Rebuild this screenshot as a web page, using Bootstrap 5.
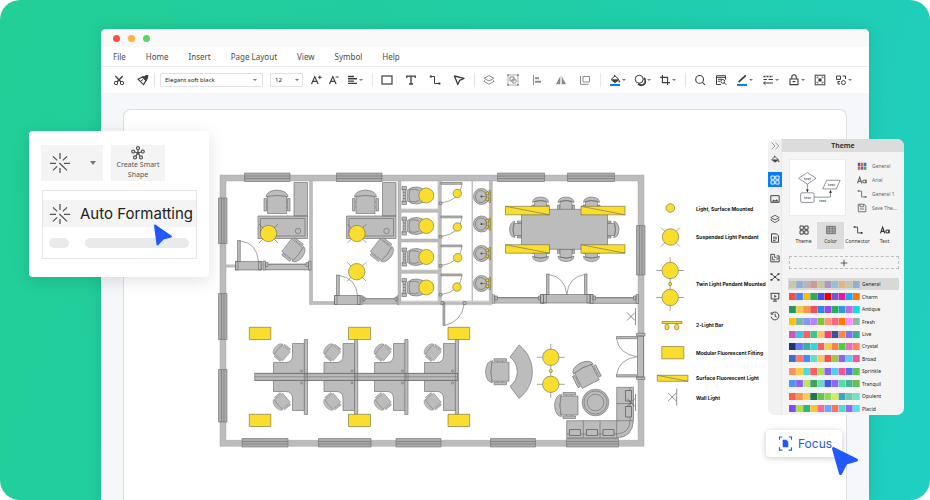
<!DOCTYPE html>
<html lang="en">
<head>
<meta charset="utf-8">
<meta name="viewport" content="width=device-width, initial-scale=1">
<title>Floor plan editor</title>
<link href="https://cdn.jsdelivr.net/npm/bootstrap@5.3.0/dist/css/bootstrap.min.css" rel="stylesheet">
<style>
  body { font-family: "Noto Sans", "Open Sans", sans-serif; background: #fff; color: #444; }
  .stage { min-height: 100vh; border-radius: 20px; background: linear-gradient(110deg, #22cf96 0%, #21cda2 40%, #1fcfc2 100%); padding: 29px 61px 0 101px; }
  .app-window { border-radius: 5px 5px 0 0; background: #f5f7fa; box-shadow: 0 0 16px rgba(0, 60, 50, .14); }
  .titlebar { height: 18px; background: #f9f9f9; padding-left: 12px; gap: 8px; }
  .dot { width: 7px; height: 7px; }
  .dot-red { background: #fe4b4f; } .dot-amber { background: #feb140; } .dot-green { background: #5cd46c; }
  .menubar { height: 20px; gap: 20px; padding-left: 12px; border-bottom: 1px solid #ececec; }
  .menubar a { font-size: 8px; line-height: 12px; color: #4a4a4a; }
  .toolbar { height: 26px; padding-left: 12px; }
  .tools { gap: 12px; } .tools-6 { gap: 6px; } .tools-8 { gap: 8px; } .tools-9 { gap: 9px; }
  .tool { border: 0; background: none; padding: 0; height: 14px; color: #3d3d3d; display: flex; align-items: center; }
  .tool svg { width: 12px; height: 12px; }
  .tool.muted { color: #8a8a8a; }
  .tool.drop { width: 17px; justify-content: space-between; }
  .tool.drop::after, .caret { content: ""; border: 2px solid transparent; border-top-color: #777; border-bottom: 0; }
  .rule { width: 1px; height: 14px; background: #e8e8e8; margin: 0 8px 0 9px; }
  .rule.tight { margin: 0 5px; }
  .pick { appearance: none; height: 14px; border: 1px solid #e2e2e2; border-radius: 1px; padding: 0 4px; font-size: 6px; line-height: 11px; color: #222;
    background: #fff url("data:image/svg+xml,%3Csvg xmlns='http://www.w3.org/2000/svg' viewBox='0 0 4 2'%3E%3Cpath d='M0 0h4L2 2z' fill='%23777'/%3E%3C/svg%3E") no-repeat right 5px center / 4px 2px; }
  .pick-font { width: 103px; } .pick-size { width: 33px; margin: 0 7px; background-position: right 3px center; }
  .workspace { padding: 16px 22px 0; }
  .paper { background: #fff; border: 1px solid #dcdee0; border-bottom: 0; border-radius: 8px 8px 0 0; }
  .ic { fill: none; stroke: currentColor; stroke-width: 1; display: block; flex: none; }

  .smart-card { top: 131px; left: 29px; width: 180px; padding: 14px 12px 18px; border-radius: 4px; background: #fff; box-shadow: 0 4px 18px rgba(0, 0, 0, .12); }
  .tile { border: 0; background: #f4f4f4; height: 36px; color: #555; padding: 0; font-size: 7px; line-height: 10px; }
  .tile-burst { width: 62px; gap: 18px; } .tile-shape { width: 54px; white-space: nowrap; }
  .caret { border-width: 3px; border-top-width: 4px; }
  .result { border: 1px solid #e6e6e6; margin: 9px 0 0 1px; padding: 9px 0 10px; }
  .result-item { background: #f4f4f4; border: 0; width: 100%; height: 27px; padding: 0 5px; gap: 8px; font-family: Inter, sans-serif; font-size: 15px; line-height: 20px; color: #222; white-space: nowrap; }
  .result-item svg { color: #555; }
  .pill { height: 10px; border-radius: 5px; background: #eaeaea; }
  .pill-row { gap: 16px; padding: 11px 7px 0 6px; }
  .pill-short { width: 20px; }
  .pointer-small { left: 124px; top: 92px; width: 20px; height: 24px; }
  .pointer-big { left: 65px; top: 16px; width: 28px; height: 30px; }

  .theme-panel { top: 139px; right: 26px; width: 136px; height: 276px; border-radius: 7px; background: #f4f4f4; overflow: hidden; font-size: 5px; line-height: 8px; color: #444; }
  .rail { width: 14px; padding-bottom: 91px; background: #f1f1f1; border-right: 1px solid #e9e9e9; }
  .rail button { border: 0; padding: 0; background: none; width: 14px; height: 15px; color: #444; display: flex; align-items: center; justify-content: center; }
  .rail button svg { width: 10px; height: 10px; }
  .rail .fold { height: 13px; color: #888; } .rail .paint { margin-bottom: 5px; }
  .rail .on { background: #087cff; color: #fff; }
  .panel-title { height: 13px; background: #dcdcdc; font-size: 7px; line-height: 13px; font-weight: 600; color: #222; margin: 0; text-align: center; }
  .preview { width: 57px; height: 57px; background: #fff; border: 1px solid #ececec; }
  .top-part { padding: 7px 0 0 7px; gap: 11px; }
  .opts { gap: 4px; padding-top: 2px; }
  .opts button { border: 0; background: none; padding: 0; color: #666; display: flex; align-items: center; gap: 5px; height: 10px; white-space: nowrap; }
  .opts svg { width: 10px; height: 10px; }
  .tabs { padding: 6px 5px 0 8px; }
  .tabs button { border: 0; background: none; padding: 3px 0 0; width: 27px; height: 27px; color: #333; display: flex; flex-direction: column; align-items: center; gap: 2px; }
  .tabs svg { width: 10px; height: 10px; }
  .tabs .on { background: #dcdcdc; }
  .add { border: 1px dashed #bdbdbd; background: none; margin: 7px 5px 9px 7px; height: 13px; padding: 0; display: flex; align-items: center; justify-content: center; color: #444; }
  .add svg { width: 8px; height: 8px; }
  .schemes { margin: 0 5px 0 6px; }
  .schemes button { border: 0; background: none; padding: 0 0 0 1px; gap: 2px; color: #222; min-height: 0; }
  .schemes .on { background: #d8d8d8; }
  .schemes .on svg { opacity: .45; }
  .schemes svg { width: 71px; height: 7px; flex: none; }
  .focus-wrap { top: 430px; right: 88px; width: 76px; }
  .focus-btn { height: 27px; border: 0; border-radius: 4px; background: #fff; color: #2458f5; font-family: Inter, sans-serif; font-size: 12px; line-height: 16px; padding: 0 0 0 12px; gap: 5px; box-shadow: 0 1px 6px rgba(0, 0, 0, .22); }

  .plan text { font: bold 5px Inter, sans-serif; fill: #111; }
  .solid { fill: #bcbcbc; stroke: #666; stroke-width: .6; }
  .glass { fill: #ababab; stroke: #6e6e6e; stroke-width: .6; }
  .thin { fill: none; stroke: #666; stroke-width: .6; }
  .lamp { fill: #fbdd2e; stroke: #6f6a3c; stroke-width: .6; }
  .wall { fill: none; stroke: #bcbcbc; stroke-width: 3; }
  .edge { fill: none; stroke: #999; stroke-width: .4; }
</style>
</head>
<body>
<svg class="d-none" xmlns="http://www.w3.org/2000/svg">
  <symbol id="i-cut" viewBox="0 0 12 12"><path d="M2.3 2 8 8M9.7 2 4 8" stroke-width="1.3"/><circle cx="3" cy="9" r="1.7"/><circle cx="9" cy="9" r="1.7"/></symbol>
  <symbol id="i-brush" viewBox="0 0 12 12"><path d="M1 5.200 5.600 3l3.400 3.600L6.600 10.600z" stroke-width="1.200"/><path d="M5.600 2.800 9.200 6.600 10.200 4.800 11 1.600 8.600 1.600 7.600 2.600z" fill="currentColor"/><path d="M3.600 7.400 6 5.400"/></symbol>
  <symbol id="i-aplus" viewBox="0 0 12 12"><path d="M1.5 10 4.8 2.6 8.1 10M2.8 7.3h4" stroke-width="1.2"/><path d="M8 3.3h3.6M9.8 1.5v3.6"/></symbol>
  <symbol id="i-aminus" viewBox="0 0 12 12"><path d="M1.5 10 4.8 2.6 8.1 10M2.8 7.3h4" stroke-width="1.2"/><path d="M7.6 3h3"/></symbol>
  <symbol id="i-align" viewBox="0 0 12 12"><path d="M2 2.500h6M2 4.800h9M2 7.100h6M2 9.400h9" stroke-width="1.400"/></symbol>
  <symbol id="i-rect" viewBox="0 0 12 12"><rect x="1" y="2" width="10" height="8" stroke-width="1.2"/></symbol>
  <symbol id="i-text" viewBox="0 0 12 12"><path d="M1.8 4V2.2h8.4V4M6 2.2V10M4 10h4" stroke-width="1.3"/></symbol>
  <symbol id="i-conn" viewBox="0 0 12 12"><path d="M2 2.5h3.5V9.5H10"/><path d="M.8 1.4h2v2h-2zM9.4 8.4h2v2h-2z" fill="currentColor" stroke="none"/></symbol>
  <symbol id="i-arrow" viewBox="0 0 12 12"><path d="M1.5 2 11 4.4 6.7 6.3 4.8 10.6z" stroke-width="1.3" stroke-linejoin="round"/></symbol>
  <symbol id="i-layers" viewBox="0 0 12 12"><path d="M6 1.6 11 4.3 6 7 1 4.3zM1.6 6.2 1 7.3 6 10.3 11 7.3 10.4 6.2" stroke-linejoin="round"/></symbol>
  <symbol id="i-group" viewBox="0 0 12 12"><path d="M1 1h10v10H1z" stroke-width=".7"/><path d="M3 3h4v4H3z"/><circle cx="7" cy="7" r="2.2"/><path d="M.2.2h1.800v1.800H.2zM10 .2h1.800v1.800H10zM.2 10h1.800v1.800H.2zM10 10h1.800v1.800H10z" fill="currentColor" stroke="none"/></symbol>
  <symbol id="i-left" viewBox="0 0 12 12"><path d="M2.5 1v10"/><path d="M4 4.3h4M4 7.7h6" stroke-width="2"/></symbol>
  <symbol id="i-flip" viewBox="0 0 12 12"><path d="M5.3 2V10.3H1zM6.7 2V10.3H11z" fill="currentColor" stroke="none"/></symbol>
  <symbol id="i-stack" viewBox="0 0 12 12"><path d="M4 2.500h6.500v5.500H4zM1.500 2V10.300H9.500"/></symbol>
  <symbol id="i-fill" viewBox="0 0 12 12"><path d="M5.6.8V3M6 1.8 10 5.6 6 8.6 2 5.6z"/><path d="M3 5.6h7L6 8.4zM10.4 6.4l.8 1.6h-1.6z" fill="currentColor" stroke-width=".5"/></symbol>
  <symbol id="i-fillbar" viewBox="0 0 12 12"><use href="#i-fill"/><path d="M1 11h10" stroke="#087cff" stroke-width="1.8"/></symbol>
  <symbol id="i-shadow" viewBox="0 0 12 12"><path d="M9.800 4a4 4 0 1 1-5.600 5.600" stroke-width="1.800"/><circle cx="5.200" cy="5.200" r="4"/></symbol>
  <symbol id="i-crop" viewBox="0 0 12 12"><path d="M3.4 1v7.6H11M1 3.4h7.6V11" stroke-width="1.1"/></symbol>
  <symbol id="i-search" viewBox="0 0 12 12"><circle cx="5.6" cy="5.4" r="3.9" stroke-width="1.1"/><path d="m8.4 8.4 2.6 2.4" stroke-width="1.1"/></symbol>
  <symbol id="i-find" viewBox="0 0 12 12"><path d="M6 10.5H1.5V1.7h9v4M1.5 3.4h9M3 5.3h4M3 7.3h2"/><circle cx="7.8" cy="7.4" r="1.9"/><path d="m9.2 8.8 2 2"/></symbol>
  <symbol id="i-pen" viewBox="0 0 12 12"><path d="M2.6 8.2 9.8 1.4" stroke-width="1.7"/><path d="M1 11h10" stroke="#087cff" stroke-width="1.8"/></symbol>
  <symbol id="i-lines" viewBox="0 0 12 12"><path d="M1.500 2.500h9.500" stroke-width="1.400" stroke-dasharray="2 1"/><path d="M1.500 5.500h3.500M6.500 5.500H11M1.500 9h9.500M3.400 7.600 1.600 9l1.800 1.400"/></symbol>
  <symbol id="i-lock" viewBox="0 0 12 12"><path d="M2 5h8v5.6H2zM3.8 5V3a2.2 2.2 0 0 1 4.4 0V5M4.6 7.6h2.8" stroke-width="1.1"/></symbol>
  <symbol id="i-frame" viewBox="0 0 12 12"><rect x="1.2" y="1.2" width="9.6" height="9.6"/><path d="M3 4.4V3h1.4M7.6 3H9v1.4M9 7.6V9H7.6M4.4 9H3V7.6" stroke-width=".8"/><path d="M4.4 4.4h3.2v3.2H4.4z" fill="currentColor" stroke="none"/></symbol>
  <symbol id="i-swap" viewBox="0 0 12 12"><path d="M1.5 2h4v3.4h-4zM7.5 2h3v3M3 7v3h2"/><circle cx="8.4" cy="8.6" r="2"/><path d="M3 7.5h2"/></symbol>
  <symbol id="i-burst" viewBox="0 0 24 24"><path d="M12 2v6M12 17v5M2 12.4h6M16 12.4h6M5 5.4l4.2 4M19 5.4l-4.2 4M5 19.4l4.2-4M11.4 12l7.6 7.4" stroke-width="1.3"/></symbol>
  <symbol id="i-smart" viewBox="0 0 14 14"><g stroke-width="1.2"><circle cx="7" cy="2.2" r="1.5"/><circle cx="2.2" cy="5.6" r="1.5"/><circle cx="11.8" cy="5.6" r="1.5"/><circle cx="4" cy="11.4" r="1.5"/><circle cx="10" cy="11.4" r="1.5"/><path d="M7 3.5V7M3.5 6 7 7l3.5-1M7 7 4.8 10.2M7 7l2.2 3.2"/></g><circle cx="7" cy="7" r="1.6" fill="currentColor" stroke="none"/></symbol>
  <symbol id="i-fold" viewBox="0 0 12 12"><path d="m2 2 4 4-4 4M6.5 2l4 4-4 4"/></symbol>
  <symbol id="i-grid" viewBox="0 0 12 12"><path d="M1.2 1.2h4v4h-4zM6.9 1.2h4v4h-4zM1.2 6.9h4v4h-4zM6.9 6.9h4v4h-4z" stroke-width="1.1"/></symbol>
  <symbol id="i-image" viewBox="0 0 12 12"><path d="M1 2h10v8H1z" stroke-width="1.2"/><path d="M2 9 4.5 6.6 6 8 8 6.4 10 9z" fill="currentColor" stroke="none"/></symbol>
  <symbol id="i-doc" viewBox="0 0 12 12"><path d="M1.8 1h6L10.2 3.4V11H1.8z" stroke-width="1.2"/><path d="M3.6 5h4.8M3.6 7h4.8M3.6 9h3"/></symbol>
  <symbol id="i-plan" viewBox="0 0 12 12"><path d="M5.500 1.600H1v9h10V3.500H8" stroke-width="1.200"/><path d="M3.200 4v4.200h3M5.500 1.600v3.600h2.500M8.500 8.400V6.200H11"/></symbol>
  <symbol id="i-net" viewBox="0 0 12 12"><path d="m2 2.6 8 6.8M10 2.6 2 9.4"/><path d="M.6 1.4h2.4v2.2H.6zM9 1.4h2.4v2.2H9zM.6 8.4h2.4v2.2H.6zM9 8.4h2.4v2.2H9zM4.8 4.8h2.4v2.4H4.8z" fill="currentColor" stroke="none"/></symbol>
  <symbol id="i-show" viewBox="0 0 12 12"><path d="M.6 1.6h10.8M1.4 1.6v6.8h9.2V1.6M6 8.4V11M3.6 11h4.8" stroke-width="1.2"/><path d="M5 3.2 8 5 5 6.8z" fill="currentColor" stroke="none"/></symbol>
  <symbol id="i-hist" viewBox="0 0 12 12"><path d="M2 3.4a4.7 4.7 0 1 1-.7 3.4M1.4 1.4v2.4h2.6M6.2 3.4v3l2 1" stroke-width="1.2"/></symbol>
  <symbol id="i-aa" viewBox="0 0 12 12"><path d="M.6 10 3.2 2.6 5.8 10M1.4 7.6h3.6" stroke-width="1.4"/><circle cx="8.8" cy="7.8" r="1.8" stroke-width="1.3"/><path d="M11 5.4V10" stroke-width="1.3"/></symbol>
  <symbol id="i-save" viewBox="0 0 12 12"><path d="M1.5 1.5H8.6l2 2v7h-9zM3.6 1.5v3h4.4v-3M3.4 7.2h5.2" stroke-width="1.1"/></symbol>
  <symbol id="i-colors" viewBox="0 0 12 12"><g stroke="none"><path fill="#5d52a8" d="M1 2h3v4H1z"/><path fill="#de6157" d="M4.6 2h3v4h-3z"/><path fill="#3972c5" d="M8.2 2h3v4h-3z"/><path fill="#e3574e" d="M1 6.6h3v4H1z"/><path fill="#7d5f9e" d="M4.6 6.6h3v4h-3z"/><path fill="#49a76c" d="M8.2 6.6h3v4h-3z"/></g></symbol>
  <symbol id="i-table" viewBox="0 0 12 12"><path d="M.8 1.600h10.400v8.800H.8z" fill="#aaa" stroke="#666"/><path d="M.8 4.400h10.400M.8 7.400h10.400M4 1.600v8.800M7.800 1.600v8.800" stroke="#777" stroke-width=".8"/></symbol>
  <symbol id="i-plus" viewBox="0 0 12 12"><path d="M6 1v10M1 6h10" stroke-width="1.3"/></symbol>
  <symbol id="i-focus" viewBox="0 0 16 18"><path d="M1.6 5V2H4.6M11.4 2h3v3M14.4 13v3h-3M4.6 16h-3v-3" stroke-width="1.2"/><path d="M5 5h3.8L11 7.2V13H5z" fill="currentColor" stroke="none"/></symbol>

  <symbol id="chair" viewBox="-15 -15 30 30" overflow="visible">
    <path class="solid" d="M-11-7Q-11-13 0-14 11-13 11-7L9-7.500Q0-9.500-9-7.500z"/>
    <path class="solid" d="M-9.500-7.500Q0-9.500 9.500-7.500V9.500H-9.500z"/>
    <path class="solid" d="M-13-5.500h2.500V7H-13zM10.500-5.500H13V7H10.500z"/>
    <path class="thin" d="M-10.500-2h1M-10.500 3h1M9.500-2h1M9.500 3h1"/>
  </symbol>
  <symbol id="seat" viewBox="-9 -7 18 14" overflow="visible">
    <path class="solid" d="M-6 6V-2Q0-4 6-2V6zM-8-1Q-8-6 0-6.500 8-6 8-1L6-2Q0-4-6-2z"/>
    <path class="solid" d="M-8.500 1.500h2V6h-2zM6.500 1.500h2V6h-2z"/>
  </symbol>
  <symbol id="pendant" viewBox="-11 -11 22 22" overflow="visible"><path class="thin" d="m-9.500-9.500 19 19M9.500-9.500l-19 19"/><circle class="lamp" r="8.200"/></symbol>
  <symbol id="twin" viewBox="-15 -28 30 56" overflow="visible"><path class="thin" d="M0-27V27M-14-13.500H14M-14 13.500H14"/><circle class="lamp" cy="-13.500" r="8.200"/><circle class="lamp" cy="13.500" r="8.200"/><circle class="lamp" r="1.600"/></symbol>
  <symbol id="toilet" viewBox="0 -9 32 18" overflow="visible">
    <path class="solid" d="M0-9h4.500v3.500H3.500v11H4.500V9H0V5.500H1v-11H0zM5-5Q9-9 15-8.500 25-7 26 0 25 7 15 8.500 9 9 5 5z"/>
    <path class="thin" d="M8-6Q14-7 17-5M8 6Q14 7 17 5M8-6Q6 0 8 6M1-3h2.500M1 0h2.500M1 3h2.500M0-6h4M0 6h4"/><circle class="lamp" cx="24.300" r="7.500"/>
  </symbol>
  <symbol id="sink" viewBox="-9 -9 18 18" overflow="visible">
    <circle class="solid" r="8"/><ellipse class="thin" cx="-.5" rx="5.500" ry="6"/><path class="thin" d="M-1 0H5"/><circle r=".9" fill="#444"/>
    <path class="lamp" d="M7.500-6H9V6H7.500zM4.500-4.500h3v2.500h-3zM4.500 1.500h3V4h-3z"/>
  </symbol>
  <symbol id="fluor" viewBox="0 0 44 9" overflow="visible"><path class="lamp" d="M0 0H44V8.500H0z"/><path class="thin" d="m0 0 44 8.500"/></symbol>
  <symbol id="walllight" viewBox="-5 -9 10 18" overflow="visible"><path class="thin" d="m-4.500-4 8 8M-4.500 4l8-8M4-8.500v17" style="stroke:#444"/></symbol>
  <symbol id="stalldoor" viewBox="0 0 22 22" overflow="visible"><path class="solid" d="M0 0H21V1.800H0z"/><path class="thin" d="M21 1.800Q19 18 0 20.500"/><path class="solid" d="M-2 19.500H1v2.500h-3z"/></symbol>
  <symbol id="glazing" viewBox="0 0 48 9" overflow="visible"><path d="M0 3.500H48V9H0z" fill="#bcbcbc"/><path class="thin" d="M0 8.800H48"/><path d="M3 3.200H45" stroke="#444" stroke-width=".8"/><path class="solid" d="M0 0H2.500V9H0zM45.500 0H48V9H45.500zM2.500 1.500H5V5.500H2.500zM43 1.500h2.500v4H43z"/></symbol>
  <symbol id="cubicle" viewBox="0 0 52 38" overflow="visible">
    <path class="solid" d="M19 4H31V34H0V23H12Q19 23 19 16z"/><circle class="thin" cx="28" cy="31.500" r="1"/>
    <g transform="translate(8.500 13) rotate(-50) scale(.62)"><use href="#chair" x="-15" y="-15" width="30" height="30"/></g>
  </symbol>
  <symbol id="office" viewBox="0 0 50 90" overflow="visible">
    <path class="solid" d="M36 0H49.500V33.500H36zM0 33.500H49.500V56H0z"/><path class="thin" d="M2.500 36H47V53.500H2.500z"/><circle class="thin" cx="40" cy="48.500" r="2.700"/>
    <use href="#chair" x="4" y="6.500" width="30" height="30"/>
    <g transform="translate(35 67.500) rotate(128) scale(.84)"><use href="#chair" x="-15" y="-15" width="30" height="30"/></g>
    <use href="#pendant" x="-.500" y="40" width="22" height="22"/>
  </symbol>
</svg>

<main class="stage position-relative d-flex flex-column overflow-hidden">
  <div class="app-window flex-fill d-flex flex-column overflow-hidden">
    <div class="titlebar d-flex align-items-center"><span class="dot dot-red rounded-circle"></span><span class="dot dot-amber rounded-circle"></span><span class="dot dot-green rounded-circle"></span></div>
    <nav class="menubar d-flex align-items-center bg-white" aria-label="Main menu">
      <a class="text-decoration-none" href="#">File</a><a class="text-decoration-none" href="#">Home</a><a class="text-decoration-none" href="#">Insert</a><a class="text-decoration-none" href="#">Page Layout</a><a class="text-decoration-none" href="#">View</a><a class="text-decoration-none" href="#">Symbol</a><a class="text-decoration-none" href="#">Help</a>
    </nav>
    <div class="toolbar d-flex align-items-center bg-white" role="toolbar" aria-label="Tools">
      <div class="tools d-flex">
        <button class="tool" aria-label="Cut"><svg class="ic"><use href="#i-cut"/></svg></button>
        <button class="tool" aria-label="Format painter"><svg class="ic"><use href="#i-brush"/></svg></button>
      </div>
      <span class="rule tight"></span>
      <select class="pick pick-font" aria-label="Font"><option>Elegant soft black</option></select>
      <select class="pick pick-size" aria-label="Font size"><option>12</option></select>
      <div class="tools-6 d-flex">
        <button class="tool" aria-label="Larger text"><svg class="ic"><use href="#i-aplus"/></svg></button>
        <button class="tool" aria-label="Smaller text"><svg class="ic"><use href="#i-aminus"/></svg></button>
        <button class="tool drop" aria-label="Align text"><svg class="ic"><use href="#i-align"/></svg></button>
      </div>
      <span class="rule"></span>
      <div class="tools d-flex">
        <button class="tool" aria-label="Rectangle"><svg class="ic"><use href="#i-rect"/></svg></button>
        <button class="tool" aria-label="Text"><svg class="ic"><use href="#i-text"/></svg></button>
        <button class="tool" aria-label="Connector"><svg class="ic"><use href="#i-conn"/></svg></button>
        <button class="tool" aria-label="Select"><svg class="ic"><use href="#i-arrow"/></svg></button>
      </div>
      <span class="rule"></span>
      <div class="tools d-flex">
        <button class="tool muted" aria-label="Layers"><svg class="ic"><use href="#i-layers"/></svg></button>
        <button class="tool muted" aria-label="Group"><svg class="ic"><use href="#i-group"/></svg></button>
        <button class="tool muted" aria-label="Align left"><svg class="ic"><use href="#i-left"/></svg></button>
        <button class="tool muted" aria-label="Flip"><svg class="ic"><use href="#i-flip"/></svg></button>
        <button class="tool muted" aria-label="Arrange"><svg class="ic"><use href="#i-stack"/></svg></button>
      </div>
      <span class="rule"></span>
      <div class="tools-8 d-flex">
        <button class="tool drop" aria-label="Fill"><svg class="ic"><use href="#i-fillbar"/></svg></button>
        <button class="tool drop" aria-label="Shadow"><svg class="ic"><use href="#i-shadow"/></svg></button>
        <button class="tool drop" aria-label="Crop"><svg class="ic"><use href="#i-crop"/></svg></button>
      </div>
      <span class="rule"></span>
      <div class="tools-9 d-flex">
        <button class="tool" aria-label="Search"><svg class="ic"><use href="#i-search"/></svg></button>
        <button class="tool" aria-label="Find in page"><svg class="ic"><use href="#i-find"/></svg></button>
        <button class="tool drop" aria-label="Line colour"><svg class="ic"><use href="#i-pen"/></svg></button>
        <button class="tool drop" aria-label="Line style"><svg class="ic"><use href="#i-lines"/></svg></button>
        <button class="tool drop" aria-label="Lock"><svg class="ic"><use href="#i-lock"/></svg></button>
        <button class="tool" aria-label="Fit"><svg class="ic"><use href="#i-frame"/></svg></button>
        <button class="tool drop" aria-label="Replace shape"><svg class="ic"><use href="#i-swap"/></svg></button>
      </div>
    </div>
    <div class="workspace flex-fill d-flex flex-column">
      <div class="paper flex-fill">
        <svg class="plan d-block w-100" viewBox="124 110 722 390" role="img" aria-label="Office lighting floor plan">
          <!-- outer walls -->
          <path class="wall" d="M223 178H641V443.300H223z" style="stroke-width:6"/>
          <path class="edge" d="M220 175H644V446.300H220zM226 181H638V440.300H226z"/>
          <!-- inner walls -->
          <path class="wall" d="M226 266h10M311 181V303H335M398 303H492M399.500 181V303M439.800 181V303M490.800 181V303M401 210.700h38M401 240.400h38M401 271.800h38"/>
          <path class="edge" d="M309.500 181V304.500H335M312.500 181V301.500H335M398 181V301M401 181v28h37v-28M401 212.300h37V239H401zM401 242h37v28H401zM401 273.400h37V301H401zM441.300 181V301H489.300V181M492.300 181V295M398 304.700H492"/>
          <path class="thin" d="M472.200 181V301"/>
          <!-- outer windows -->
          <g class="glass">
            <path d="M244.500 173H290v8.500h-45.500zM336.500 173H382v8.500h-45.500zM497.500 173h47v8.500h-47zM567.500 173h47v8.500h-47zM242 438.500h46v8.500h-46zM318.500 438.500H371v8.500h-52.500zM396 438.500h45v8.500h-45zM490.500 438.500h45v8.500h-45zM566.500 438.500h52v8.500h-52z"/>
            <path d="M218.500 198h8.500v45.500h-8.500zM218.500 293.500h8.500v46h-8.500zM218.500 369.500h8.500V422h-8.500zM636.500 225.500h8.500V275h-8.500z"/>
            <path d="M244.500 176H290M244.500 178.500H290M336.500 176H382M336.500 178.500H382M497.500 176h47M497.500 178.500h47M567.500 176h47M567.500 178.500h47M242 441.500h46M242 444h46M318.500 441.500H371M318.500 444H371M396 441.500h45M396 444h45M490.500 441.500h45M490.500 444h45M566.500 441.500h52M566.500 444h52M221.500 198v45.500M224 198v45.500M221.500 293.500v46M224 293.500v46M221.500 369.500V422M224 369.500V422M639.500 225.500V275M642 225.500V275"/>
          </g>
          <!-- room doors and glazing -->
          <path class="solid" d="M235.500 261.500H262v8.500h-26.500zM235.500 261.500h2.500v8.500h-2.500zM258.500 261.500h2.500v8.500h-2.500zM237.500 240.500h2.800v21h-2.800z"/><path class="thin" d="M240.300 241Q257 243 258.500 261.500"/>
          <use href="#glazing" x="263" y="261" width="48" height="9"/>
          <path class="solid" d="M334.500 295.500H361v9h-26.500zM334.500 295.500h2.500v9h-2.500zM357.500 295.500h2.500v9h-2.500zM336.500 275h2.800v20.500h-2.800z"/><path class="thin" d="M339.300 275.500Q356 278 357.500 295.500"/>
          <svg x="361" y="295.500" width="38" height="9" viewBox="0 0 48 9" preserveAspectRatio="none"><use href="#glazing" width="48" height="9"/></svg>
          <svg x="492" y="294.500" width="52" height="9" viewBox="0 0 48 9" preserveAspectRatio="none"><use href="#glazing" width="48" height="9"/></svg>
          <path class="solid" d="M540.500 294.500H593v8.500h-52.500zM540.500 294.500h3v8.500h-3zM543.500 294.500h3v8.500h-3zM587 294.500h3v8.500h-3zM590 294.500h3v8.500h-3zM546.500 274h2.500v20.500h-2.500zM584.500 274h2.500v20.500h-2.500z"/>
          <path class="thin" d="M549 274.500Q565 277 566.800 294.500 568.500 277 584.500 274.500"/>
          <use href="#glazing" x="590.500" y="294.500" width="48" height="9"/>
          <path class="solid" d="M443 303h1.800v22.500H443zM441 301.500h3v3h-3zM463 301.500h3v3h-3z"/><path class="thin" d="M444.800 325.500Q462 321 464 304.500"/>
          <path class="solid" d="M636.500 333.300H645v2.700h-8.500zM636.500 377H645v2.500h-8.500zM616.500 336.500H636.500V338.700H616.500zM616.500 374.700H636.500V377H616.500zM637.500 336h6v41h-6z"/>
          <path class="thin" d="M616.500 338.700Q619 354 637 356.700 619 359 616.500 374.700"/>
          <!-- offices -->
          <use href="#office" x="258" y="182.500" width="50" height="90"/>
          <use href="#office" x="346.500" y="182.500" width="50" height="90"/>
          <use href="#pendant" x="345.700" y="260.700" width="22" height="22"/>
          <!-- washrooms -->
          <use href="#toilet" x="402" y="186.500" width="32" height="18"/><use href="#toilet" x="402" y="217" width="32" height="18"/><use href="#toilet" x="402" y="248" width="32" height="18"/><use href="#toilet" x="402" y="278.500" width="32" height="18"/>
          <use href="#stalldoor" x="441" y="182.500" width="22" height="22"/><use href="#stalldoor" x="441" y="216" width="22" height="22"/><use href="#stalldoor" x="441" y="245" width="22" height="22"/><use href="#stalldoor" x="441" y="274" width="22" height="22"/>
          <g class="lamp"><circle cx="457.300" cy="193.500" r="4.200"/><circle cx="457.300" cy="227" r="4.200"/><circle cx="457.700" cy="257.700" r="4.200"/><circle cx="457" cy="287" r="4.200"/></g>
          <use href="#sink" x="472.500" y="187.500" width="18" height="18"/><use href="#sink" x="472.500" y="215" width="18" height="18"/><use href="#sink" x="472.500" y="244.500" width="18" height="18"/><use href="#sink" x="472.500" y="274.500" width="18" height="18"/>
          <!-- meeting room -->
          <g id="seat-row"><use href="#seat" x="531.500" y="196.500" width="18" height="14"/><use href="#seat" x="557" y="196.500" width="18" height="14"/><use href="#seat" x="582.500" y="196.500" width="18" height="14"/></g>
          <use href="#seat-row" transform="matrix(1 0 0 -1 0 458.600)"/>
          <g transform="translate(516 229.500) rotate(-90)"><use href="#seat" x="-9" y="-7" width="18" height="14"/></g>
          <g transform="translate(612.500 229.500) rotate(90)"><use href="#seat" x="-9" y="-7" width="18" height="14"/></g>
          <path class="solid" d="M521.500 209.300h86v40h-86z"/>
          <use href="#fluor" x="505.500" y="206.300" width="44" height="9"/><use href="#fluor" x="581" y="206.300" width="44" height="9"/><use href="#fluor" x="505.500" y="244.700" width="44" height="9"/><use href="#fluor" x="581" y="244.700" width="44" height="9"/>
          <!-- cubicles -->
          <g id="desks"><use href="#cubicle" x="273.500" y="339.500" width="52" height="38"/><use href="#cubicle" x="324" y="339.500" width="52" height="38"/><use href="#cubicle" x="374.500" y="339.500" width="52" height="38"/><use href="#cubicle" x="424.500" y="339.500" width="52" height="38"/></g>
          <use href="#desks" transform="matrix(1 0 0 -1 0 754)"/>
          <path class="solid" d="M304.300 339.500h3.200v75h-3.200zM354.500 339.500h3.200v75h-3.200zM404.800 339.500h3.200v75h-3.200zM455.300 339.500h3.200v75h-3.200zM254.700 373.300H457.500v7.200H254.700z"/>
          <path d="M254.700 373.600H457.500M254.700 376.800H457.500M254.700 380.300H457.500M305.800 373v7.500M355.800 373v7.500M406 373v7.500" fill="none" stroke="#6a6a6a" stroke-width=".6"/>
          <path class="lamp" d="M249.300 327.300h21.500v12.200h-21.500zM348.500 327.300h22v12.200h-22zM448 327.300h21.700v12.200H448zM249.300 414.300h21.500v12.200h-21.500zM348.500 414.300h22v12.200h-22zM448 414.300h21.700v12.200H448z"/>
          <!-- lounge -->
          <g transform="translate(499.500 371.700) rotate(-90)"><use href="#chair" x="-15" y="-15" width="30" height="30"/></g>
          <path class="solid" d="M510 357 519 345A33.400 33.400 0 0 1 519 398.400L510 386.300A18.400 18.400 0 0 0 510 357z"/>
          <use href="#twin" x="535.800" y="342.800" width="30" height="56"/>
          <g transform="translate(586.500 375.500) rotate(-27)"><use href="#chair" x="-15" y="-15" width="30" height="30"/></g>
          <g transform="translate(568.500 405.500) rotate(-90)"><use href="#chair" x="-15" y="-15" width="30" height="30"/></g>
          <circle class="solid" cx="595.500" cy="402.500" r="13.300"/><circle class="thin" cx="595.500" cy="402.500" r="11.500"/><circle class="thin" cx="595.500" cy="402.500" r="8.300"/>
          <path class="solid" d="M566.700 420.700H616.700V387.300H633.500V421Q632 437.700 617 437.700H566.700z"/>
          <path class="thin" d="M583.300 420.700v17M600 420.700v17M616.700 420.700v17M616.700 403.500h16.800M616.700 420.700H633M566.700 434H617Q630 433 630 420V387.500"/>
          <path class="solid" d="M569.500 429.500h11V435.500h-11zM586.500 429.500h11V435.500h-11zM603 429.500h11V435.500H603zM625.500 390.500h6v10.500h-6zM625.500 406.500h6V417h-6z" style="stroke:#444"/>
          <use href="#walllight" x="626.500" y="307.500" width="10" height="18"/><use href="#walllight" x="626.500" y="393.500" width="10" height="18"/>
          <!-- legend -->
          <circle class="lamp" cx="670.300" cy="208" r="4.300"/>
          <use href="#pendant" x="659.500" y="226" width="22" height="22"/>
          <use href="#twin" x="655.200" y="256" width="30" height="56"/>
          <path class="lamp" d="M662 321.500h20v2h-20z"/><ellipse class="lamp" cx="667" cy="327" rx="2.100" ry="2.800"/><ellipse class="lamp" cx="676.700" cy="327" rx="2.100" ry="2.800"/>
          <path class="lamp" d="M661.800 346.500h22v12.300h-22zM657.300 375.300H688v6h-30.700z"/><path class="thin" d="m657.300 375.300 30.700 6"/>
          <use href="#walllight" x="667.700" y="388" width="10" height="18"/>
          <text x="696" y="210.500">Light, Surface Mounted</text>
          <text x="696" y="239">Suspended Light Pendant</text>
          <text x="696" y="286">Twin Light Pendant Mounted</text>
          <text x="696" y="327">2-Light Bar</text>
          <text x="696" y="355">Modular Fluorescent Fitting</text>
          <text x="696" y="380">Surface Fluorescent Light</text>
          <text x="696" y="400">Wall Light</text>
        </svg>
      </div>
    </div>
  </div>

  <section class="smart-card position-absolute" aria-label="Smart shapes">
    <div class="d-flex gap-2">
      <button class="tile tile-burst d-flex align-items-center justify-content-center" aria-label="Auto format"><svg class="ic" width="24" height="24"><use href="#i-burst"/></svg><span class="caret"></span></button>
      <button class="tile tile-shape d-flex flex-column align-items-center justify-content-center"><svg class="ic" width="14" height="14"><use href="#i-smart"/></svg><span>Create Smart<br>Shape</span></button>
    </div>
    <div class="result">
      <button class="result-item d-flex align-items-center"><svg class="ic" width="24" height="24"><use href="#i-burst"/></svg>Auto Formatting</button>
      <div class="pill-row d-flex"><span class="pill pill-short"></span><span class="pill flex-fill"></span></div>
    </div>
    <svg class="pointer-small position-absolute" viewBox="0 0 20 24"><path d="M2 2.500 18 13.500 10 15.500 4.500 21.500z" fill="#2458ff" stroke="#2458ff" stroke-width="2" stroke-linejoin="round"/></svg>
  </section>

  <aside class="theme-panel position-absolute d-flex" aria-label="Theme">
    <div class="rail d-flex flex-column">
      <button class="fold" aria-label="Collapse"><svg class="ic"><use href="#i-fold"/></svg></button>
      <button class="paint" aria-label="Fill"><svg class="ic"><use href="#i-fill"/></svg></button>
      <div class="flex-fill d-flex flex-column justify-content-between">
        <button class="on" aria-label="Theme"><svg class="ic"><use href="#i-grid"/></svg></button>
        <button aria-label="Image"><svg class="ic"><use href="#i-image"/></svg></button>
        <button aria-label="Layers"><svg class="ic"><use href="#i-layers"/></svg></button>
        <button aria-label="Page"><svg class="ic"><use href="#i-doc"/></svg></button>
        <button aria-label="Floor plan"><svg class="ic"><use href="#i-plan"/></svg></button>
        <button aria-label="Relations"><svg class="ic"><use href="#i-net"/></svg></button>
        <button aria-label="Present"><svg class="ic"><use href="#i-show"/></svg></button>
        <button aria-label="History"><svg class="ic"><use href="#i-hist"/></svg></button>
      </div>
    </div>
    <div class="flex-fill d-flex flex-column">
      <h2 class="panel-title">Theme</h2>
      <div class="top-part d-flex">
        <svg class="preview" viewBox="0 0 57 57"><g fill="none" stroke="#777" stroke-width=".8"><path d="M9 19 18 13 27 19 18 25z"/><path d="M38 21H52L48 30H34zM18 25V31"/><rect x="11" y="34" width="14" height="10" rx="1.500"/><path d="M25 38.500H42V33"/></g><path d="M16.500 30.500h3L18 33.500zM40.500 34h3L42 31z" fill="#222"/><g font-family="Noto Sans, sans-serif" font-size="4" fill="#111" text-anchor="middle"><text x="18" y="20.500">text</text><text x="43" y="27">text</text><text x="18" y="40.500">text</text><text x="34" y="43.500">text</text></g></svg>
        <div class="opts d-flex flex-column">
          <button><svg class="ic"><use href="#i-colors"/></svg>General</button>
          <button><svg class="ic"><use href="#i-aa"/></svg>Arial</button>
          <button><svg class="ic"><use href="#i-conn"/></svg>General 1</button>
          <button><svg class="ic"><use href="#i-save"/></svg>Save The...</button>
        </div>
      </div>
      <div class="tabs d-flex">
        <button><svg class="ic"><use href="#i-grid"/></svg>Theme</button>
        <button class="on"><svg class="ic"><use href="#i-table"/></svg>Color</button>
        <button><svg class="ic"><use href="#i-conn"/></svg>Connector</button>
        <button><svg class="ic"><use href="#i-aa"/></svg>Text</button>
      </div>
      <button class="add" aria-label="Add scheme"><svg class="ic"><use href="#i-plus"/></svg></button>
      <div class="schemes flex-fill d-flex flex-column" id="schemes"></div>
    </div>
  </aside>

  <div class="focus-wrap position-absolute">
    <button class="focus-btn w-100 d-flex align-items-center"><svg class="ic" width="15" height="17"><use href="#i-focus"/></svg>Focus</button>
    <svg class="pointer-big position-absolute" viewBox="0 0 28 30"><path d="M2.500 2.500 25.500 14 15 17 9.500 27.500z" fill="#2458ff" stroke="#2458ff" stroke-width="3" stroke-linejoin="round"/></svg>
  </div>
</main>
<script src="https://cdn.jsdelivr.net/npm/bootstrap@5.3.0/dist/js/bootstrap.bundle.min.js"></script>
<script>
  const schemes = {
    General: "b5b16e 3f7fd0 8e8e8e cc4b42 9fc04f 7450a5 3fa9ca f5861f b5b16e 3f7fd0",
    Charm: "fd4b3e 4285f4 fbbc05 34a853 4a48ff ee0000 7158e2 ea1899 18a8fc ff7800",
    Antique: "20995a f2c84b f39645 ee5253 2e86f0 9b4be0 27ae60 2d9cdb c565ee 15dbd8",
    Fresh: "fdc00f 78b9a4 8795ff b784ff 7acb27 ff9680 ff6485 ff7800 ff8cff 8fb89c",
    Live: "cf56b8 42bfe0 fa6062 42c483 fbc45c f4466c 3552a5 fd8648 846ffa 34b58d",
    Crystal: "22356b 5c7cff 42ae96 3cd2d6 ff5e5e f2d04a f8834a 3fd63f f568c0 f9875a",
    Broad: "3a70c9 ff7768 468aff 66dccb f9c758 fa4d50 9bca3c 8f62e8 58d2ee f2559f",
    Sprinkle: "fb9360 ffcc47 48dce4 ff5c5c aede5c 8b5ff0 4fd0f2 f2559f 5874e6 55c858",
    Tranquil: "4d94fb 8f62e8 b8e46a 3fa35c 6adcc4 4458ea 8f68f8 4fdfab 45b796 6abf58",
    Opulent: "fd5e4c f5954e f4ce50 20784a 6cc24c 8fdc58 d6ec5a 3aa8b6 6ac8b4 6ae6c4",
    Placid: "7c4dff a9e243 34b184 f4c537 ff6690 66a8ff f5735f 58d8c6 8f68f8 4fe6f0"
  };
  document.getElementById("schemes").innerHTML = Object.entries(schemes).map(([name, list], i) =>
    `<button class="flex-fill d-flex align-items-center${i ? "" : " on"}"><svg viewBox="0 0 71 7" aria-hidden="true">` +
    list.split(" ").map((c, k) => `<rect x="${k * 7.1}" width="6.8" height="7" fill="#${c}"/>`).join("") +
    `</svg>${name}</button>`).join("");
</script>
</body>
</html>
